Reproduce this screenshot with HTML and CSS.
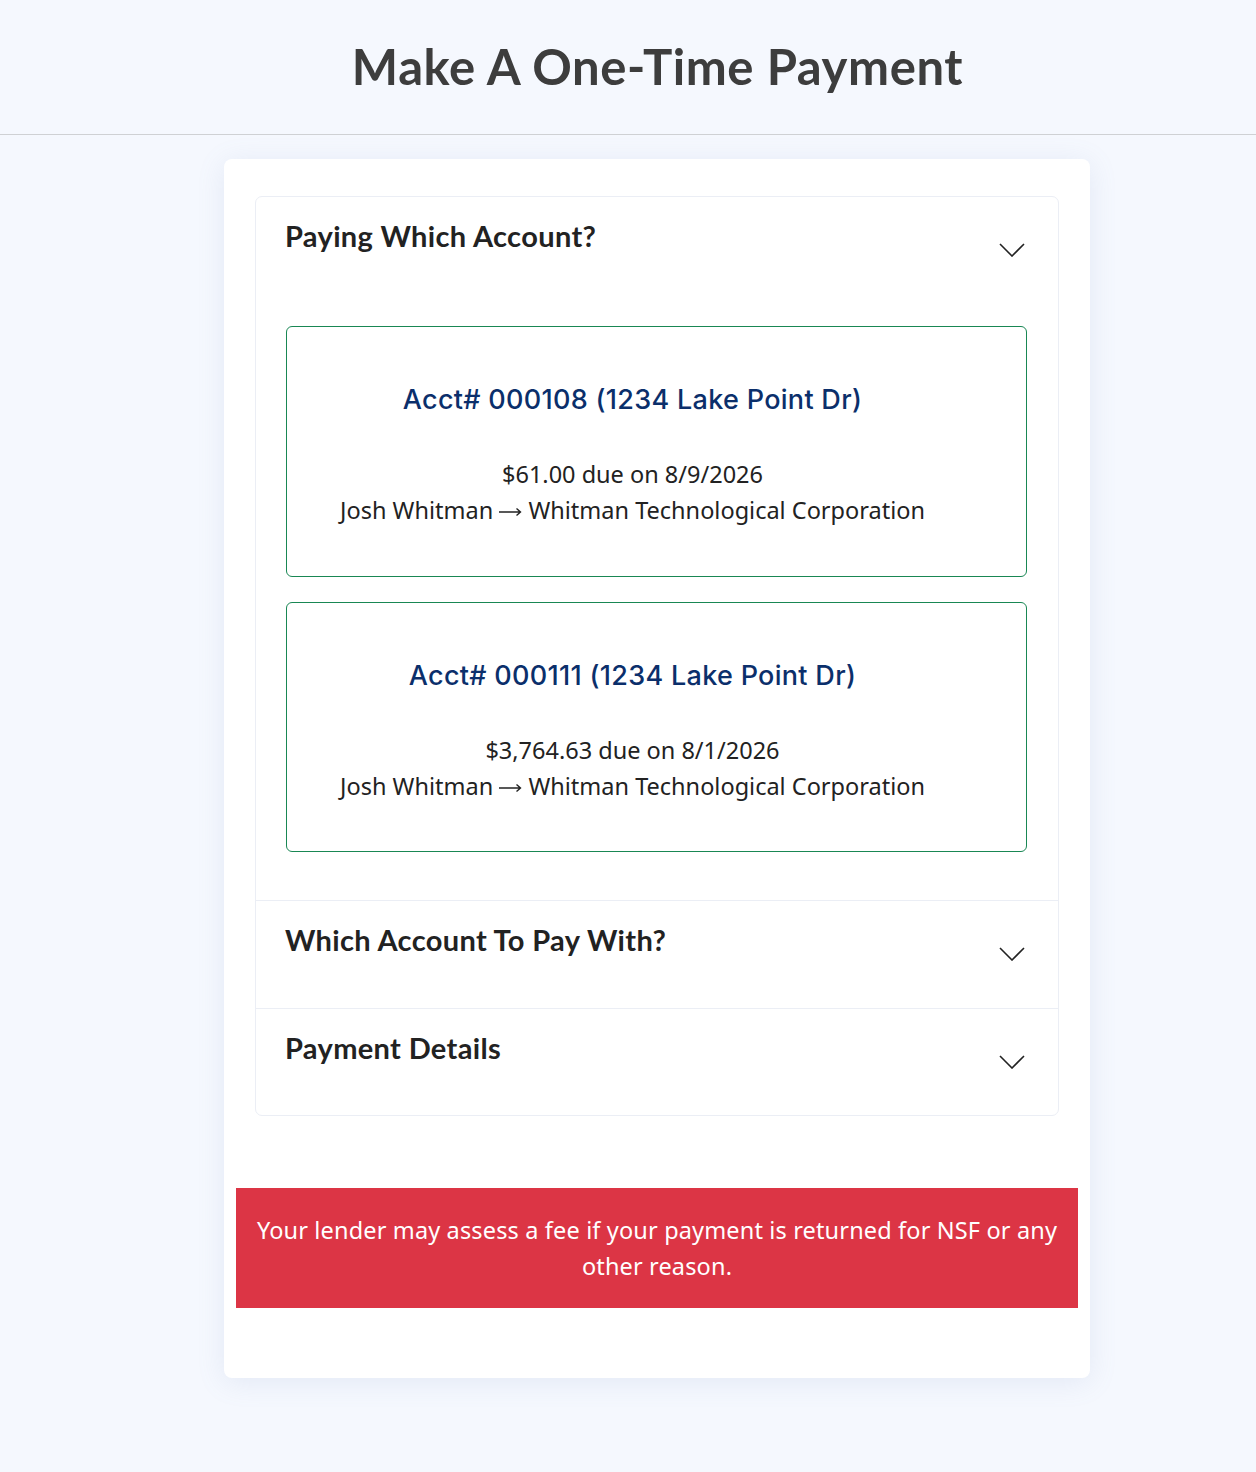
FILE: index.html
```html
<!DOCTYPE html>
<html lang="en">
<head>
<meta charset="utf-8">
<title>Make A One-Time Payment</title>
<link rel="stylesheet" href="styles.css">
</head>
<body>
<header class="page-header">
  <h1 class="page-title">Make A One-Time Payment</h1>
</header>
<main class="main">
  <section class="card">
    <div class="accordion">
      <div class="acc-item">
        <div class="acc-header">
          <h2 class="acc-title">Paying Which Account?</h2>
          <svg class="chev" width="26" height="14" viewBox="0 0 26 14"><path d="M1 1 L13 13 L25 1" fill="none" stroke="#222" stroke-width="1.6"/></svg>
        </div>
        <div class="acc-body">
          <div class="acct">
            <h3 class="acct-title">Acct# 000108 (1234 Lake Point Dr)</h3>
            <p class="acct-line">$61.00 due on 8/9/2026</p>
            <p class="acct-line">Josh Whitman <svg class="arrow" width="23" height="10" viewBox="0 0 23 10" role="img" aria-label="→"><path d="M0 5 H21.5 M17.5 1.5 L21.5 5 L17.5 8.5" fill="none" stroke="#222" stroke-width="1.4"/></svg> Whitman Technological Corporation</p>
          </div>
          <div class="acct">
            <h3 class="acct-title">Acct# 000111 (1234 Lake Point Dr)</h3>
            <p class="acct-line">$3,764.63 due on 8/1/2026</p>
            <p class="acct-line">Josh Whitman <svg class="arrow" width="23" height="10" viewBox="0 0 23 10" role="img" aria-label="→"><path d="M0 5 H21.5 M17.5 1.5 L21.5 5 L17.5 8.5" fill="none" stroke="#222" stroke-width="1.4"/></svg> Whitman Technological Corporation</p>
          </div>
        </div>
      </div>
      <div class="acc-item">
        <div class="acc-header">
          <h2 class="acc-title">Which Account To Pay With?</h2>
          <svg class="chev" width="26" height="14" viewBox="0 0 26 14"><path d="M1 1 L13 13 L25 1" fill="none" stroke="#222" stroke-width="1.6"/></svg>
        </div>
      </div>
      <div class="acc-item">
        <div class="acc-header">
          <h2 class="acc-title">Payment Details</h2>
          <svg class="chev" width="26" height="14" viewBox="0 0 26 14"><path d="M1 1 L13 13 L25 1" fill="none" stroke="#222" stroke-width="1.6"/></svg>
        </div>
      </div>
    </div>
    <div class="alert">Your lender may assess a fee if your payment is returned for NSF or any other reason.</div>
  </section>
</main>
</body>
</html>
```

FILE: styles.css
```css
* { box-sizing: border-box; }
html, body { margin: 0; padding: 0; }
body {
  background: #f5f8fe;
  font-family: "Noto Sans", "Open Sans", sans-serif;
  color: #222;
  min-height: 1472px;
}
.page-header {
  height: 135px;
  border-bottom: 1px solid #cfd1d4;
  display: flex;
  align-items: center;
  justify-content: center;
  padding-left: 59px;
}
.page-title {
  margin: 0;
  font-family: Lato, "Noto Sans", sans-serif;
  font-weight: 700;
  font-size: 49px;
  color: #3d3d3d;
  letter-spacing: 0.6px;
  padding-bottom: 2px;
}
.main {
  padding-top: 24px;
  padding-left: 58px;
  display: flex;
  justify-content: center;
}
.card {
  width: 866px;
  background: #fff;
  border-radius: 8px;
  box-shadow: 0 4px 28px rgba(120, 140, 190, 0.14);
  padding: 37px 12px 70px;
}
.accordion {
  margin: 0 19px;
  border: 1px solid #ebeef5;
  border-radius: 7px;
}
.acc-item + .acc-item { border-top: 1px solid #ebeef5; }
.acc-header {
  height: 107px;
  display: flex;
  justify-content: space-between;
  align-items: flex-start;
  padding: 21px 33px 0 29px;
}
.acc-item:last-child .acc-header { height: 106px; }
.acc-title {
  margin: 0;
  font-family: Lato, "Noto Sans", sans-serif;
  font-weight: 700;
  font-size: 29px;
  line-height: 36px;
  letter-spacing: 0.35px;
  color: #222;
}
.chev { align-self: center; margin-top: -22px; }
.acc-body {
  padding: 22px 31px 48px 30px;
  display: flex;
  flex-direction: column;
  gap: 25px;
}
.acct {
  border: 1px solid #198754;
  border-radius: 6px;
  padding: 53px 48px 47.5px 0;
  text-align: center;
}
.acct-title {
  margin: 0 0 36px;
  font-family: Inter, Roboto, sans-serif;
  font-weight: 500;
  font-size: 27px;
  line-height: 40px;
  letter-spacing: 0.3px;
  color: #0b2f6b;
}
.acct-line {
  margin: 0;
  font-size: 23.5px;
  line-height: 36px;
  color: #222;
}
.arrow {
  vertical-align: 2px;
}
.alert {
  margin-top: 72px;
  background: #dc3545;
  color: #fff;
  text-align: center;
  font-size: 23.5px;
  line-height: 36px;
  letter-spacing: 0.15px;
  padding: 24px 16px 24px;
}
```
